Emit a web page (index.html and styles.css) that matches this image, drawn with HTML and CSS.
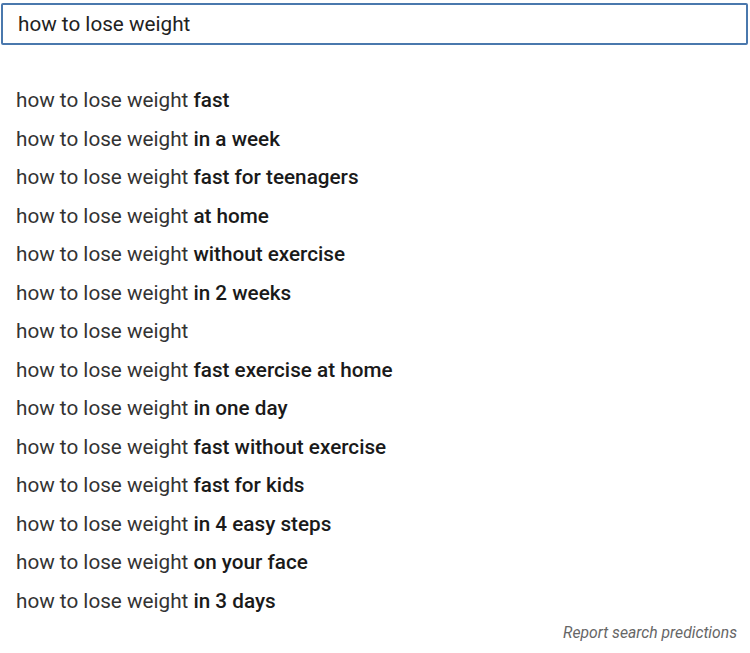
FILE: index.html
```html
<!DOCTYPE html>
<html lang="en">
<head>
    <meta charset="UTF-8">
    <title>Search</title>
    <link rel="stylesheet" href="styles.css">
</head>
<body>
    <div class="search-box">
        <input type="text" class="search-input" value="how to lose weight">
    </div>
    <ul class="suggestions">
        <li>how to lose weight <b>fast</b></li>
        <li>how to lose weight <b>in a week</b></li>
        <li>how to lose weight <b>fast for teenagers</b></li>
        <li>how to lose weight <b>at home</b></li>
        <li>how to lose weight <b>without exercise</b></li>
        <li>how to lose weight <b>in 2 weeks</b></li>
        <li>how to lose weight</li>
        <li>how to lose weight <b>fast exercise at home</b></li>
        <li>how to lose weight <b>in one day</b></li>
        <li>how to lose weight <b>fast without exercise</b></li>
        <li>how to lose weight <b>fast for kids</b></li>
        <li>how to lose weight <b>in 4 easy steps</b></li>
        <li>how to lose weight <b>on your face</b></li>
        <li>how to lose weight <b>in 3 days</b></li>
    </ul>
    <div class="report">Report search predictions</div>
</body>
</html>
```

FILE: styles.css
```css
body {
    margin: 0;
    padding: 0;
    background: #ffffff;
    font-family: Roboto, 'Noto Sans', sans-serif;
    color: #222;
}

.search-box {
    padding: 3px 2px 0 1px;
}

.search-input {
    display: block;
    box-sizing: border-box;
    width: 100%;
    height: 42px;
    border: 2px solid #4a78ad;
    border-radius: 2px;
    padding: 0 0 0 15px;
    font-family: Roboto, sans-serif;
    font-size: 20.7px;
    color: #222;
    outline: none;
}

.suggestions {
    list-style: none;
    margin: 0;
    padding: 36px 0 0 16px;
}

.suggestions li {
    height: 38.5px;
    line-height: 38px;
    font-size: 20.7px;
    color: #333;
}

.suggestions b {
    font-weight: 500;
    color: #1a1a1a;
}

.report {
    text-align: right;
    padding: 3px 13px 0 0;
    font-size: 15.7px;
    font-style: italic;
    color: #666;
}
```
